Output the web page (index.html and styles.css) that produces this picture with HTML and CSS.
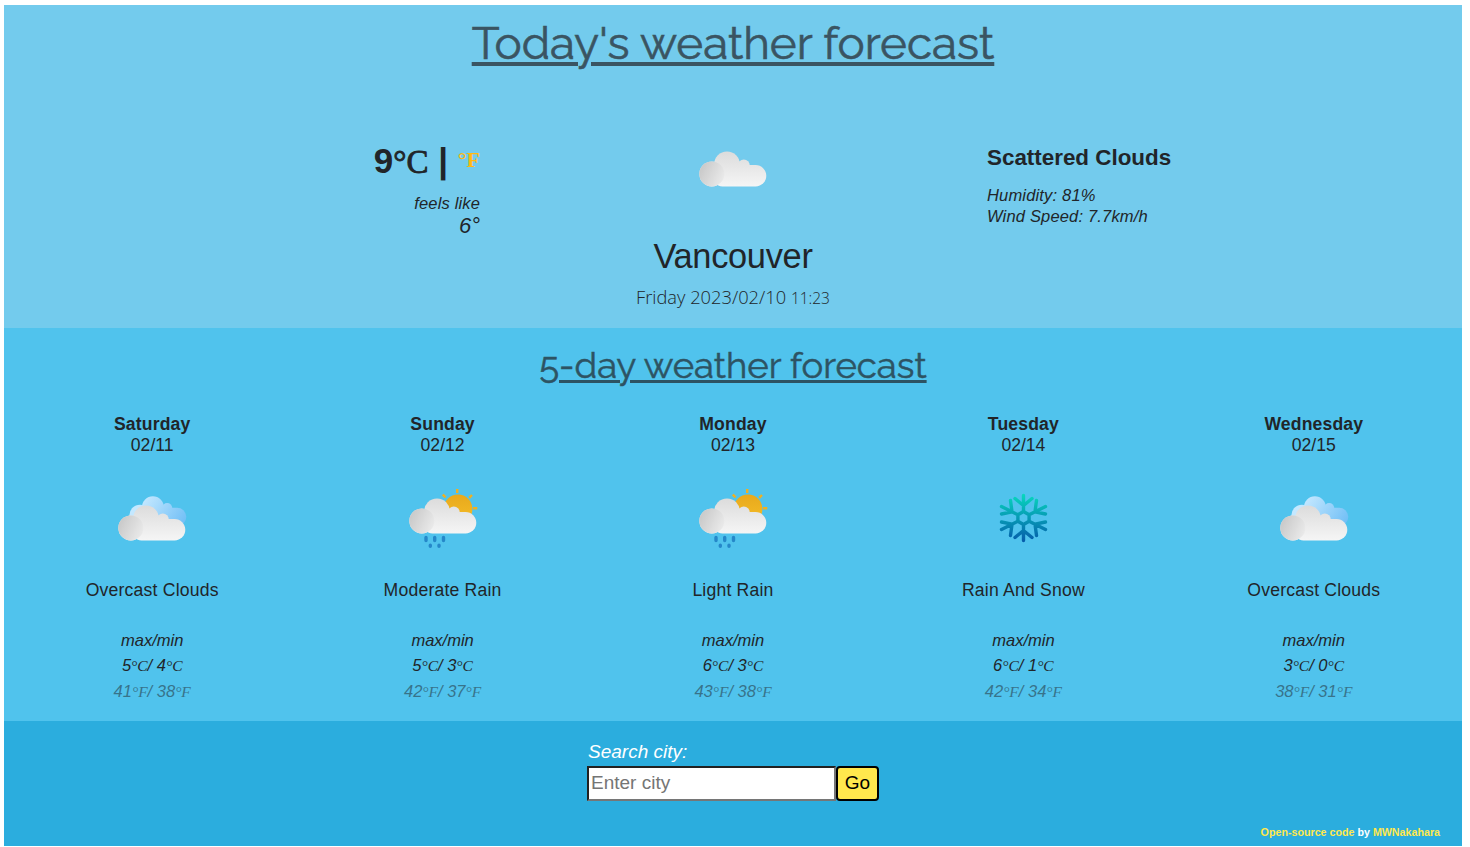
FILE: index.html
```html
<!DOCTYPE html>
<html lang="en">
<head>
<meta charset="utf-8">
<title>Weather forecast</title>
<link rel="stylesheet" href="styles.css">
</head>
<body>
<svg class="defs" width="0" height="0">
  <defs>
    <linearGradient id="gc" gradientUnits="userSpaceOnUse" x1="0" y1="22" x2="0" y2="56"><stop offset="0" stop-color="#dcdcdc"/><stop offset="1" stop-color="#f5f5f5"/></linearGradient>
    <linearGradient id="gl" x1="0.1" y1="0.3" x2="0.95" y2="0.7"><stop offset="0" stop-color="#cbcbcb"/><stop offset="1" stop-color="#e9e9e9"/></linearGradient>
    <linearGradient id="gb" gradientUnits="userSpaceOnUse" x1="25" y1="22" x2="70" y2="52"><stop offset="0" stop-color="#c4e8ff"/><stop offset="1" stop-color="#73c0f6"/></linearGradient>
    <linearGradient id="gs" x1="0" y1="0" x2="0" y2="1"><stop offset="0" stop-color="#e8a91c"/><stop offset="1" stop-color="#f5bd28"/></linearGradient>
    <linearGradient id="gn" gradientUnits="userSpaceOnUse" x1="0" y1="-24" x2="0" y2="24"><stop offset="0" stop-color="#08d8bd"/><stop offset="1" stop-color="#055bab"/></linearGradient>
    <g id="shape"><circle cx="18.800" cy="43.900" r="12.500"/><circle cx="34" cy="34.300" r="12.900"/><circle cx="50.800" cy="35.500" r="6"/><rect x="18.800" y="35" width="54.500" height="21.400" rx="10.700"/></g>
    <g id="cloud"><use href="#shape" fill="url(#gc)"/><circle cx="18.800" cy="43.900" r="12.500" fill="url(#gl)"/></g>
    <g id="rain">
      <circle cx="55" cy="29" r="14.400" fill="url(#gs)"/>
      <path d="M54.200 9V13M39.800 14.600l2.800 2.800M69 15l-2.800 2.800M70 28.300H74.300" stroke="#f0b021" stroke-width="2.400"/>
      <use href="#cloud" y="-3"/>
      <path d="M23 57.500v3M31.700 57.500v3M40.500 57.500v3M27.300 65.200v1M36 65.200v1" stroke="#2588c9" stroke-width="3.400" stroke-linecap="round"/>
    </g>
    <g id="overcast"><use href="#shape" fill="url(#gb)" transform="translate(12 -2) scale(.85)"/><use href="#cloud" y="4"/></g>
  </defs>
</svg>
<main class="app">
  <section class="today">
    <h1 class="title title-main">Today's weather forecast</h1>
    <div class="current">
      <div class="temps">
        <div class="temp">9<span class="unit">°C</span> | <span class="alt">°F</span></div>
        <div class="feels">feels like</div>
        <div class="feels-value">6°</div>
      </div>
      <div class="place">
        <svg class="icon" viewBox="0 0 80 80"><use href="#cloud"/></svg>
        <div class="city">Vancouver</div>
        <div class="date"><span class="day">Friday 2023/02/10</span> <span class="time">11:23</span></div>
      </div>
      <div class="details">
        <div class="condition">Scattered Clouds</div>
        <div class="detail humidity">Humidity: 81%</div>
        <div class="detail">Wind Speed: 7.7km/h</div>
      </div>
    </div>
  </section>
  <section class="week">
    <h2 class="title title-week">5-day weather forecast</h2>
    <div class="days">
      <div class="card"><b>Saturday</b><span class="when">02/11</span><svg class="icon" viewBox="0 0 80 80"><use href="#overcast"/></svg><span class="desc">Overcast Clouds</span><i class="mm">max/min</i><i class="cel">5<span>°C</span>/ 4<span>°C</span></i><i class="fah">41<span>°F</span>/ 38<span>°F</span></i></div>
      <div class="card"><b>Sunday</b><span class="when">02/12</span><svg class="icon" viewBox="0 0 80 80"><use href="#rain"/></svg><span class="desc">Moderate Rain</span><i class="mm">max/min</i><i class="cel">5<span>°C</span>/ 3<span>°C</span></i><i class="fah">42<span>°F</span>/ 37<span>°F</span></i></div>
      <div class="card"><b>Monday</b><span class="when">02/13</span><svg class="icon" viewBox="0 0 80 80"><use href="#rain"/></svg><span class="desc">Light Rain</span><i class="mm">max/min</i><i class="cel">6<span>°C</span>/ 3<span>°C</span></i><i class="fah">43<span>°F</span>/ 38<span>°F</span></i></div>
      <div class="card"><b>Tuesday</b><span class="when">02/14</span><svg class="icon" viewBox="0 0 80 80"><g transform="translate(40.500 38)" fill="none" stroke="url(#gn)" stroke-width="3.400" stroke-linecap="round" stroke-linejoin="round"><path d="M0-6.500L5.600-3.200V3.200L0 6.500L-5.600 3.200V-3.200ZM0-6.500V-22.500M-8.500-19.500L0-12.500L8.500-19.500M0 6.500V22.500M-8.500 19.500L0 12.500L8.500 19.500M5.600-3.200L22-11.500M22-4L11.500-6.200L13-17.500M5.600 3.200L22 11.500M22 4L11.500 6.200L13 17.500M-5.600-3.200L-22-11.500M-22-4L-11.500-6.200L-13-17.500M-5.600 3.200L-22 11.500M-22 4L-11.500 6.200L-13 17.500"/></g></svg><span class="desc">Rain And Snow</span><i class="mm">max/min</i><i class="cel">6<span>°C</span>/ 1<span>°C</span></i><i class="fah">42<span>°F</span>/ 34<span>°F</span></i></div>
      <div class="card"><b>Wednesday</b><span class="when">02/15</span><svg class="icon" viewBox="0 0 80 80"><use href="#overcast"/></svg><span class="desc">Overcast Clouds</span><i class="mm">max/min</i><i class="cel">3<span>°C</span>/ 0<span>°C</span></i><i class="fah">38<span>°F</span>/ 31<span>°F</span></i></div>
    </div>
  </section>
  <footer class="search">
    <form class="form">
      <label class="label" for="city">Search city:</label>
      <div class="row"><input class="input" id="city" type="text" placeholder="Enter city"><button class="go" type="button">Go</button></div>
    </form>
    <div class="credit"><a>Open-source code</a> by <a>MWNakahara</a></div>
  </footer>
</main>
</body>
</html>
```
FILE: styles.css
```css
* { box-sizing: border-box; }
body {
  margin: 0;
  padding: 5px 8px 0 4px;
  background: #fff;
  color: #212529;
  font-family: "Liberation Sans", Arial, sans-serif;
  overflow: hidden;
}
.defs { display: block; }
.app { height: 841px; }
.today { height: 323px; background: #73cbed; }
.week { height: 393px; background: #50c3ed; }
.search { height: 125px; background: #2badde; }
.title {
  margin: 0;
  text-align: center;
  font-family: Raleway, Lato, sans-serif;
  font-weight: 400;
  white-space: nowrap;
  text-decoration: underline;
}
.title-main {
  height: 125px;
  padding-top: 10px;
  font-size: 45.7px;
  line-height: 56px;
  color: #3a5462;
  -webkit-text-stroke: .6px;
  text-decoration-thickness: 4px;
  text-underline-offset: 3px;
}
.title-week {
  height: 84px;
  padding-top: 15px;
  font-size: 36.5px;
  line-height: 46px;
  color: #2d5363;
  -webkit-text-stroke: .5px;
  text-decoration-thickness: 3px;
  text-underline-offset: 2px;
}
.current { display: grid; grid-template-columns: 476px 506px 1fr; white-space: nowrap; }
.temps { text-align: right; padding-top: 10px; }
.temp { font-size: 35px; line-height: 42px; font-weight: 700; }
.unit { font-family: "Liberation Serif", serif; font-size: 33px; font-weight: 400; -webkit-text-stroke: .8px; }
.alt { font-family: "Liberation Serif", serif; font-size: 22px; color: #ffb911; position: relative; top: -6px; }
.feels { font-size: 16.5px; line-height: 22px; letter-spacing: .15px; font-style: italic; margin-top: 5px; }
.feels-value { font-size: 22px; line-height: 24px; font-style: italic; }
.place { display: flex; flex-direction: column; align-items: center; }
.icon { width: 80px; height: 80px; display: block; }
.city { font-size: 34.4px; line-height: 42px; letter-spacing: -.3px; margin-top: 25px; }
.date { font-family: "Open Sans", sans-serif; font-weight: 350; font-size: 18.3px; line-height: 24px; margin-top: 8px; }
.time { font-size: 15.5px; }
.details { padding: 14px 0 0 1px; }
.condition { font-size: 22.4px; line-height: 27px; font-weight: 700; }
.detail { font-size: 16.5px; line-height: 21px; letter-spacing: .17px; font-style: italic; }
.humidity { margin-top: 14px; }
.days { display: grid; grid-template-columns: repeat(5, 1fr); padding: 0 3px; }
.card { display: flex; flex-direction: column; align-items: center; font-size: 17.6px; line-height: 21px; white-space: nowrap; padding-top: 2px; }
.card b { letter-spacing: .15px; }
.card .icon { margin-top: 24px; }
.desc { margin-top: 20px; letter-spacing: .2px; }
.mm, .cel, .fah { font-size: 16.5px; line-height: 21px; }
.mm { margin-top: 29px; }
.cel { margin-top: 4px; }
.fah { margin-top: 5px; opacity: .5; }
.cel span, .fah span { font-family: "Liberation Serif", serif; font-size: 15.5px; }
.search { display: flex; flex-direction: column; align-items: center; padding: 18px 22px 0; }
.form { width: 292px; }
.label { display: block; font-size: 19px; line-height: 25px; font-style: italic; color: #fff; padding-left: 1px; }
.row { display: flex; margin-top: 2px; }
.input { width: 249px; height: 35px; padding: 0 2px 1px; border: 2px inset #767676; border-radius: 0; font: 19px "Liberation Sans", Arial, sans-serif; background: #fff; }
.input::placeholder { color: #757575; }
.go { width: 43px; height: 35px; padding: 0 0 1px; border: 2px solid #000; border-radius: 4px; background: #ffe84d; color: #000; font: 19px "Liberation Sans", Arial, sans-serif; }
.credit { align-self: flex-end; margin-top: 24px; font-size: 10.7px; line-height: 14px; font-weight: 700; color: #fff; }
.credit a { color: #ffe84d; }
```
